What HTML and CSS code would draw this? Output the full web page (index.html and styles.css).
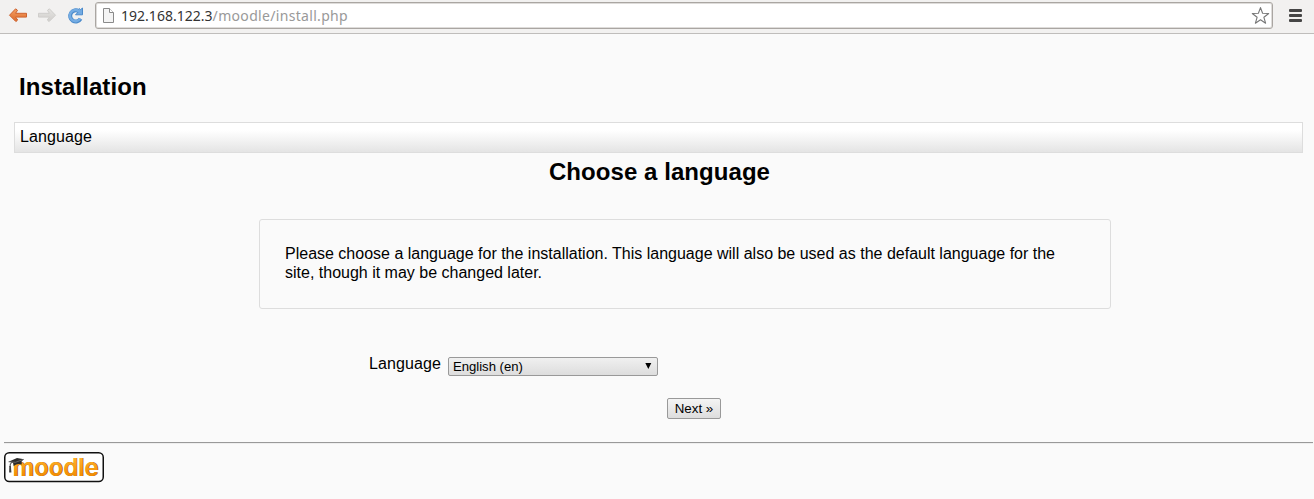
FILE: index.html
```html
<!DOCTYPE html>
<html lang="en">
<head>
<meta charset="utf-8">
<title>Installation - Moodle</title>
<link rel="stylesheet" href="styles.css">
</head>
<body>
<div class="toolbar">
  <svg class="nav-icons" width="88" height="32" viewBox="0 0 88 32" aria-hidden="true">
    <defs>
      <linearGradient id="orange" x1="0" y1="0" x2="0" y2="1"><stop offset="0" stop-color="#f5a064"/><stop offset="1" stop-color="#dc6a2a"/></linearGradient>
      <linearGradient id="grey" x1="0" y1="0" x2="0" y2="1"><stop offset="0" stop-color="#e5e4e2"/><stop offset="1" stop-color="#d0cecb"/></linearGradient>
    </defs>
    <path d="M9.5 15.2 15.6 8.8 17.5 10.3 15.6 13.3H26.5V17.1H15.6L17.7 20 15.9 21.6Z" fill="url(#orange)" stroke="#cd6330" stroke-linejoin="round"/>
    <path d="M55.5 15.2 49.4 8.8 47.5 10.3 49.4 13.3H38.5V17.1H49.4L47.3 20 49.1 21.6Z" fill="url(#grey)" stroke="#cfcecb" stroke-linejoin="round"/>
    <path d="M78.8 11.2A5.6 5.6 0 1 0 80.6 18.8" fill="none" stroke="#4c8bcb" stroke-width="4"/>
    <path d="M82.5 8V14.8H75.5L78 12.3 76.4 11.3 79.4 8.6 80.6 9.6Z" fill="#72aae2" stroke="#4c8bcb" stroke-linejoin="round"/>
    <path d="M78.6 11A5.6 5.6 0 1 0 80.2 18.5" fill="none" stroke="#74ace3" stroke-width="2.4"/>
  </svg>
  <div class="address">
    <svg width="13" height="16" viewBox="0 0 13 16" aria-hidden="true">
      <path d="M1.5.5H7.5L11.5 4.5V14.5H1.5Z" fill="#f4f4f4" stroke="#8a8a8a"/><path d="M7.5.5V4.5H11.5" fill="#fff" stroke="#8a8a8a"/>
    </svg>
    <span class="host">192.168.122.3</span><span class="path">/moodle/install.php</span>
    <svg class="star" width="20" height="20" viewBox="0 0 20 20" aria-hidden="true">
      <path d="M9.5 1.6 11.6 7.3 17.7 7.5 12.9 11.3 14.6 17.2 9.5 13.8 4.4 17.2 6.1 11.3 1.3 7.5 7.4 7.3Z" fill="#fff" stroke="#777" stroke-width="1.1" stroke-linejoin="round"/>
    </svg>
  </div>
  <svg class="menu" width="13" height="14" viewBox="0 0 13 14" aria-hidden="true">
    <g fill="#454545"><rect width="13" height="3" rx="1"/><rect y="5" width="13" height="3" rx="1"/><rect y="10" width="13" height="3" rx="1"/></g>
  </svg>
</div>
<main class="page">
  <h1 class="title">Installation</h1>
  <div class="navbar">Language</div>
  <h2 class="heading">Choose a language</h2>
  <div class="notice">Please choose a language for the installation. This language will also be used as the default language for the site, though it may be changed later.</div>
  <form class="form">
    <div class="field">
      <label class="label" for="lang">Language</label>
      <div class="select-wrap">
        <select id="lang" class="select"><option>English (en)</option></select>
        <svg class="caret" width="7" height="7" viewBox="0 0 7 7" aria-hidden="true"><path d="M.3 0H6.3L3.3 6Z"/></svg>
      </div>
    </div>
    <button class="next" type="button">Next »</button>
  </form>
  <hr class="rule">
  <svg class="logo" width="100" height="31" viewBox="0 0 100 31" role="img" aria-label="moodle">
    <defs><linearGradient id="word" x1="0" y1="0" x2="0" y2="1"><stop offset="0.2" stop-color="#ffb32c"/><stop offset="0.85" stop-color="#f08a00"/></linearGradient></defs>
    <rect x=".75" y=".75" width="98.5" height="28.7" rx="4.5" fill="#fff" stroke="#111" stroke-width="1.5"/>
    <text class="word shadow" x="9.2" y="24.4" textLength="86" lengthAdjust="spacingAndGlyphs">moodle</text>
    <text class="word" x="8.5" y="23.7" textLength="86" lengthAdjust="spacingAndGlyphs" fill="url(#word)">moodle</text>
    <path d="M4.5 9.8 13 6 20 7.3 17.7 9.2V12.6C14.5 11.4 12 12 9.7 14.2L9 10.8Z" fill="#2d2d2d"/>
    <path d="M4.5 9.8 11.5 10.3 19.5 7.4" fill="none" stroke="#777" stroke-width=".8"/>
    <path d="M8.5 10.2Q5.5 10.8 6 15" fill="none" stroke="#444"/>
    <path d="M5.3 14H6.9L7.4 20.5H5.1Z" fill="#444"/>
  </svg>
</main>
</body>
</html>
```
FILE: styles.css
```css
* { box-sizing: border-box; }

body {
  margin: 0;
  height: 499px;
  overflow: hidden;
  background: #fafafa;
  color: #000;
  font: 16px/18px "Liberation Sans", Arial, sans-serif;
}

.toolbar {
  display: flex;
  align-items: flex-start;
  height: 34px;
  background: #f2f1f0;
  border-bottom: 1px solid #bfbdbb;
}

.nav-icons { margin-right: 7px; }

.address {
  display: flex;
  align-items: center;
  width: 1178px;
  height: 27px;
  margin-top: 2px;
  padding: 0 1px 0 6px;
  background: #fff;
  border: 1px solid #aaa6a2;
  border-radius: 3px;
  box-shadow: inset 0 0 0 1px #dedcda;
  font: 14px/20px "Noto Sans", "Open Sans", sans-serif;
  white-space: nowrap;
}

.host { margin-left: 6px; color: #333; letter-spacing: 0.02px; }
.path { color: #999; letter-spacing: 0.32px; }
.star { margin-left: auto; }
.menu { margin: 9px 0 0 16px; }

.page { padding: 39px 0 0 4px; }

.title {
  margin: 0 0 22px 15px;
  font-size: 24px;
  line-height: 27px;
  letter-spacing: 0.08px;
}

.navbar {
  height: 31px;
  margin: 0 11px 0 10px;
  padding: 5px;
  border: 1px solid #ddd;
  background: linear-gradient(#fff 25%, #e4e4e4);
  letter-spacing: 0.1px;
}

.heading {
  margin: 5px 0 34px;
  padding-left: 1px;
  font-size: 24px;
  line-height: 27px;
  letter-spacing: 0.06px;
  text-align: center;
}

.notice {
  width: 852px;
  height: 90px;
  margin-left: 255px;
  padding: 24px 25px;
  border: 1px solid #ddd;
  border-radius: 3px;
  line-height: 19px;
}

.form { padding-top: 45px; }

.field {
  display: flex;
  gap: 7px;
  margin-left: 365px;
}

.label {
  width: 72px;
  padding-top: 1px;
  letter-spacing: 0.1px;
}

.select-wrap {
  position: relative;
  height: 19px;
  margin-top: 3px;
}

.select {
  display: block;
  appearance: none;
  width: 210px;
  height: 19px;
  padding: 0 4px;
  border: 1px solid #999;
  border-radius: 2px;
  background: linear-gradient(#f0f0f0, #ddd);
  color: #000;
  font: 13.1px/17px "Liberation Sans", Arial, sans-serif;
}

.caret { position: absolute; top: 6px; right: 6px; }

.next {
  display: block;
  width: 54px;
  height: 21px;
  margin: 22px 0 0 663px;
  padding: 0;
  border: 1px solid #999;
  border-radius: 2px;
  background: linear-gradient(#f4f4f4, #ddd);
  color: #000;
  font: 13.33px/17px "Liberation Sans", Arial, sans-serif;
}

.rule {
  margin: 23px 1px 8px 0;
  border: solid;
  border-width: 1px 0;
  border-color: #999 transparent #eee;
}

.logo { display: block; overflow: visible; }
.word { font: 600 24.5px Inter, "Liberation Sans", sans-serif; }
.shadow { fill: #985300; }
```
